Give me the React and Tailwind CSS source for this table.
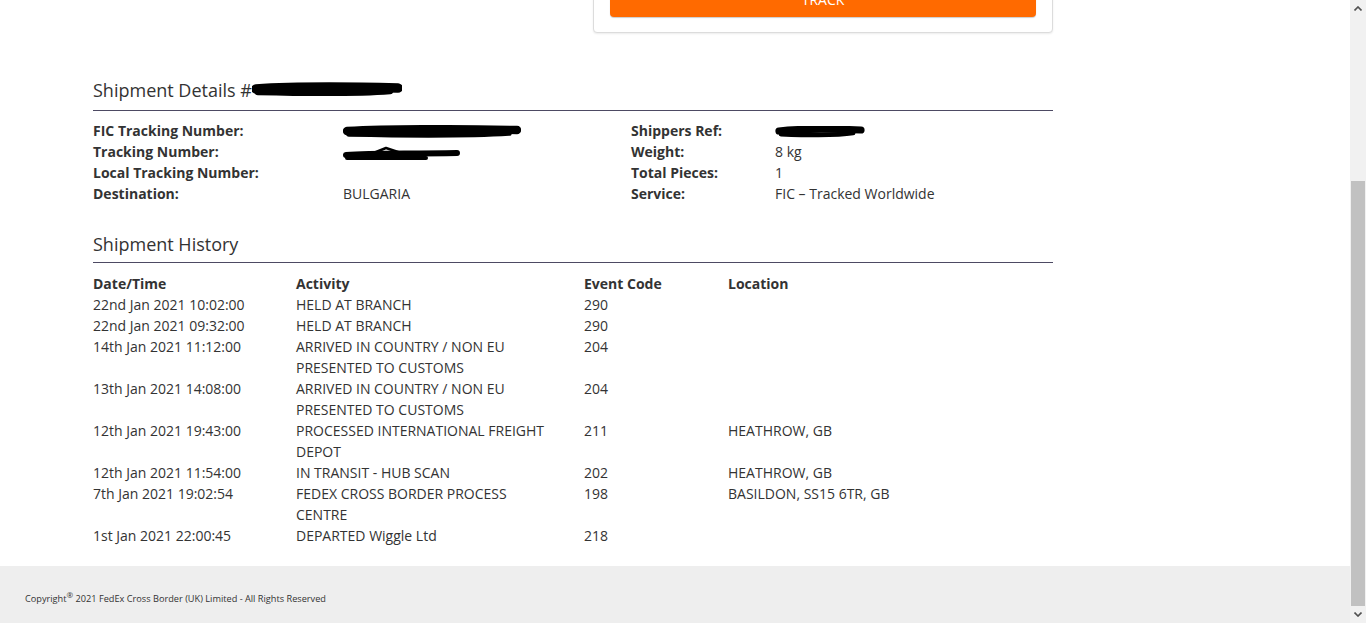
import React from 'react';

const details = [
  ['FIC Tracking Number:', 'fic', 'Shippers Ref:', 'ref'],
  ['Tracking Number:', 'trk', 'Weight:', '8 kg'],
  ['Local Tracking Number:', '', 'Total Pieces:', '1'],
  ['Destination:', 'BULGARIA', 'Service:', 'FIC – Tracked Worldwide'],
];

const history = [
  ['22nd Jan 2021 10:02:00', 'HELD AT BRANCH', '290', ''],
  ['22nd Jan 2021 09:32:00', 'HELD AT BRANCH', '290', ''],
  ['14th Jan 2021 11:12:00', 'ARRIVED IN COUNTRY / NON EU PRESENTED TO CUSTOMS', '204', ''],
  ['13th Jan 2021 14:08:00', 'ARRIVED IN COUNTRY / NON EU PRESENTED TO CUSTOMS', '204', ''],
  ['12th Jan 2021 19:43:00', 'PROCESSED INTERNATIONAL FREIGHT DEPOT', '211', 'HEATHROW, GB'],
  ['12th Jan 2021 11:54:00', 'IN TRANSIT - HUB SCAN', '202', 'HEATHROW, GB'],
  ['7th Jan 2021 19:02:54', 'FEDEX CROSS BORDER PROCESS CENTRE', '198', 'BASILDON, SS15 6TR, GB'],
  ['1st Jan 2021 22:00:45', 'DEPARTED Wiggle Ltd', '218', ''],
];

// black marker scribble used over redacted values
function Scribble({ w, h, kind }) {
  if (kind === 'trk') {
    return (
      <svg width={w} height={h} viewBox={`0 0 ${w} ${h}`} className="inline-block align-middle">
        <path d={`M3 ${h - 7} C 30 ${h - 9}, 60 ${h - 8}, ${w - 4} ${h - 9}`} stroke="#000" strokeWidth="6" strokeLinecap="round" fill="none" />
        <path d={`M4 ${h - 4} L ${w - 35} ${h - 4}`} stroke="#000" strokeWidth="4" strokeLinecap="round" fill="none" />
        <path d={`M28 ${h - 8} L 43 3 L 58 8 L 95 ${h - 9}`} stroke="#000" strokeWidth="2.5" strokeLinecap="round" strokeLinejoin="round" fill="none" />
      </svg>
    );
  }
  return (
    <svg width={w} height={h} viewBox={`0 0 ${w} ${h}`} className="inline-block align-middle">
      <path d={`M4 ${h / 2 - 1} C ${w / 3} ${h / 2 - 4}, ${(2 * w) / 3} ${h / 2 - 3}, ${w - 4} ${h / 2 - 2}`} stroke="#000" strokeWidth={h * 0.6} strokeLinecap="round" fill="none" />
      <path d={`M6 ${h / 2 + 2} C ${w / 3} ${h / 2 + 3}, ${(2 * w) / 3} ${h / 2 + 4}, ${w - 12} ${h / 2 + 1}`} stroke="#000" strokeWidth={h * 0.4} strokeLinecap="round" fill="none" />
    </svg>
  );
}

function Value({ v }) {
  if (v === 'fic') return <Scribble w={178} h={14} />;
  if (v === 'trk') return <Scribble w={118} h={17} kind="trk" />;
  if (v === 'ref') return <Scribble w={90} h={12} />;
  return v;
}

export default function App() {
  return (
    <div className="flex h-[623px] overflow-hidden bg-white text-[#333] font-['Open_Sans','Liberation_Sans',sans-serif]">
      <div className="flex flex-1 flex-col">
        <div className="flex-1">
          <div className="mx-[93px] w-[960px]">
            {/* Track card */}
            <div className="flex justify-end">
              <div className="-mt-[80px] w-[460px] rounded border border-[#dcdcdc] bg-white px-4 pb-[15px] pt-[60px] shadow-[0_1px_2px_rgba(0,0,0,0.08)]">
                <button className="h-[36px] w-full rounded-[4px] bg-[#ff6a00] text-[14px] text-white shadow-[0_1px_1px_rgba(0,0,0,0.2)]">TRACK</button>
              </div>
            </div>

            {/* Shipment Details */}
            <h2 className="mt-[45px] flex items-center border-b border-[#4d4a63] pb-[8px] text-[18px] leading-[24px]">
              Shipment Details #
              <Scribble w={150} h={16} />
            </h2>
            <div className="mt-[9px] grid grid-cols-[250px_288px_144px_1fr] text-[14px] leading-[21px]">
              {details.map((r, i) => (
                <React.Fragment key={i}>
                  <div className="font-bold">{r[0]}</div>
                  <div><Value v={r[1]} /></div>
                  <div className="font-bold">{r[2]}</div>
                  <div><Value v={r[3]} /></div>
                </React.Fragment>
              ))}
            </div>

            {/* Shipment History */}
            <h2 className="mt-[28px] border-b border-[#4d4a63] pb-[6px] text-[18px] leading-[24px]">Shipment History</h2>
            <table className="mt-[10px] w-full table-fixed text-left text-[14px] leading-[21px]">
              <thead>
                <tr>
                  <th className="w-[203px] font-bold">Date/Time</th>
                  <th className="w-[288px] font-bold">Activity</th>
                  <th className="w-[144px] font-bold">Event Code</th>
                  <th className="font-bold">Location</th>
                </tr>
              </thead>
              <tbody>
                {history.map((r, i) => (
                  <tr key={i} className="align-top">
                    <td>{r[0]}</td>
                    <td className="pr-[33px]">{r[1]}</td>
                    <td>{r[2]}</td>
                    <td>{r[3]}</td>
                  </tr>
                ))}
              </tbody>
            </table>
          </div>
        </div>

        <footer className="flex h-[57px] items-center bg-[#eeeeee] px-[25px] pt-[8px] text-[9.2px] text-[#333]">
          Copyright<sup className="text-[8px]">®</sup>&nbsp;2021 FedEx Cross Border (UK) Limited - All Rights Reserved
        </footer>
      </div>

      {/* scrollbar */}
      <div className="flex w-[16px] flex-col bg-[#f1f1f1]">
        <div className="flex h-[17px] items-center justify-center">
          <svg width="8" height="5" viewBox="0 0 8 5"><path d="M0.5 4.5 L4 1 L7.5 4.5" stroke="#505050" strokeWidth="1.6" fill="none" /></svg>
        </div>
        <div className="mt-[164px] mx-[1px] flex-1 bg-[#c1c1c1]" />
        <div className="flex h-[17px] items-center justify-center">
          <svg width="8" height="5" viewBox="0 0 8 5"><path d="M0.5 0.5 L4 4 L7.5 0.5" stroke="#505050" strokeWidth="1.6" fill="none" /></svg>
        </div>
      </div>
    </div>
  );
}
